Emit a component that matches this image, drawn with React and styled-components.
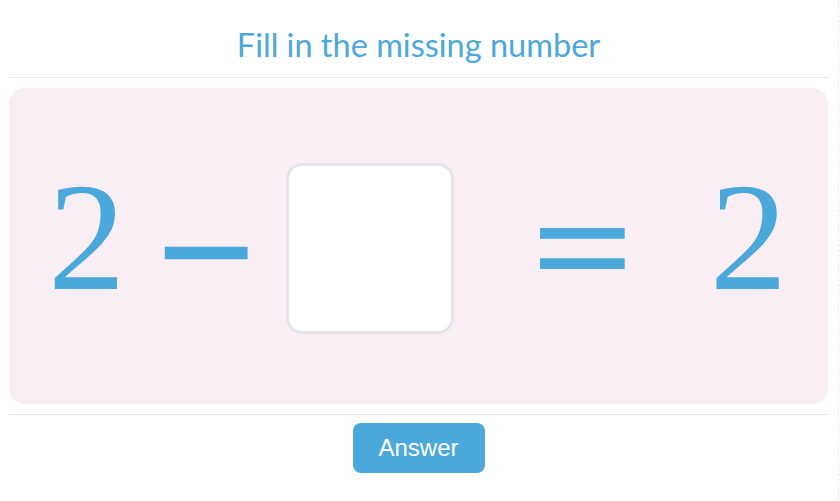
import React from 'react';
import styled, { createGlobalStyle } from 'styled-components';

const GlobalStyle = createGlobalStyle`
  html, body {
    margin: 0;
    padding: 0;
    background: #ffffff;
  }
`;

const Page = styled.div`
  width: 839px;
  height: 501px;
  border-right: 1px dashed #ececec;
  box-sizing: border-box;
  padding: 0 10px 0 9px;
`;

const Header = styled.div`
  height: 77px;
  display: flex;
  align-items: center;
  justify-content: center;
  padding-top: 12px;
  box-sizing: border-box;
`;

const Title = styled.h1`
  margin: 0;
  font-family: 'Lato', sans-serif;
  font-weight: 400;
  font-size: 32.5px;
  color: #4ba8db;
`;

const Divider = styled.div`
  height: 1px;
  background: #e5e5e5;
`;

const Panel = styled.div`
  height: 316px;
  background: #f9eef4;
  border-radius: 16px;
  margin: 10px 0;
  display: flex;
  align-items: center;
  padding-left: 38px;
  box-sizing: border-box;
`;

const Glyph = styled.span`
  display: inline-block;
  font-family: 'Liberation Serif', 'Times New Roman', serif;
  font-size: ${(p) => p.$size || 155}px;
  font-weight: ${(p) => p.$weight || 400};
  line-height: 1;
  color: #4ba8db;
  margin-left: ${(p) => p.$left || 0}px;
  margin-top: ${(p) => p.$top || 0}px;
  transform: scaleY(${(p) => p.$squash || 1});
`;

const AnswerBox = styled.div`
  width: 168px;
  height: 171px;
  box-sizing: border-box;
  border: 3px solid #e4e4e9;
  border-radius: 16px;
  background: #ffffff;
  margin-left: 29px;
  margin-top: 4px;
`;

const Footer = styled.div`
  display: flex;
  justify-content: center;
  padding-top: 8px;
`;

const Button = styled.button`
  width: 132px;
  height: 50px;
  border: none;
  border-radius: 8px;
  background: #4ba8db;
  color: #ffffff;
  font-family: 'Liberation Sans', Arial, sans-serif;
  font-size: 24px;
  padding: 0;
  cursor: pointer;
`;

export default function App() {
  return (
    <>
      <GlobalStyle />
      <Page>
        <Header>
          <Title>Fill in the missing number</Title>
        </Header>
        <Divider />
        <Panel>
          <Glyph $left={1} $top={-18}>2</Glyph>
          <Glyph $size={178} $weight={700} $left={30} $top={11}>−</Glyph>
          <AnswerBox />
          <Glyph $size={182} $weight={700} $left={77} $top={4} $squash={0.84}>=</Glyph>
          <Glyph $left={75} $top={-18}>2</Glyph>
        </Panel>
        <Divider />
        <Footer>
          <Button>Answer</Button>
        </Footer>
      </Page>
    </>
  );
}
